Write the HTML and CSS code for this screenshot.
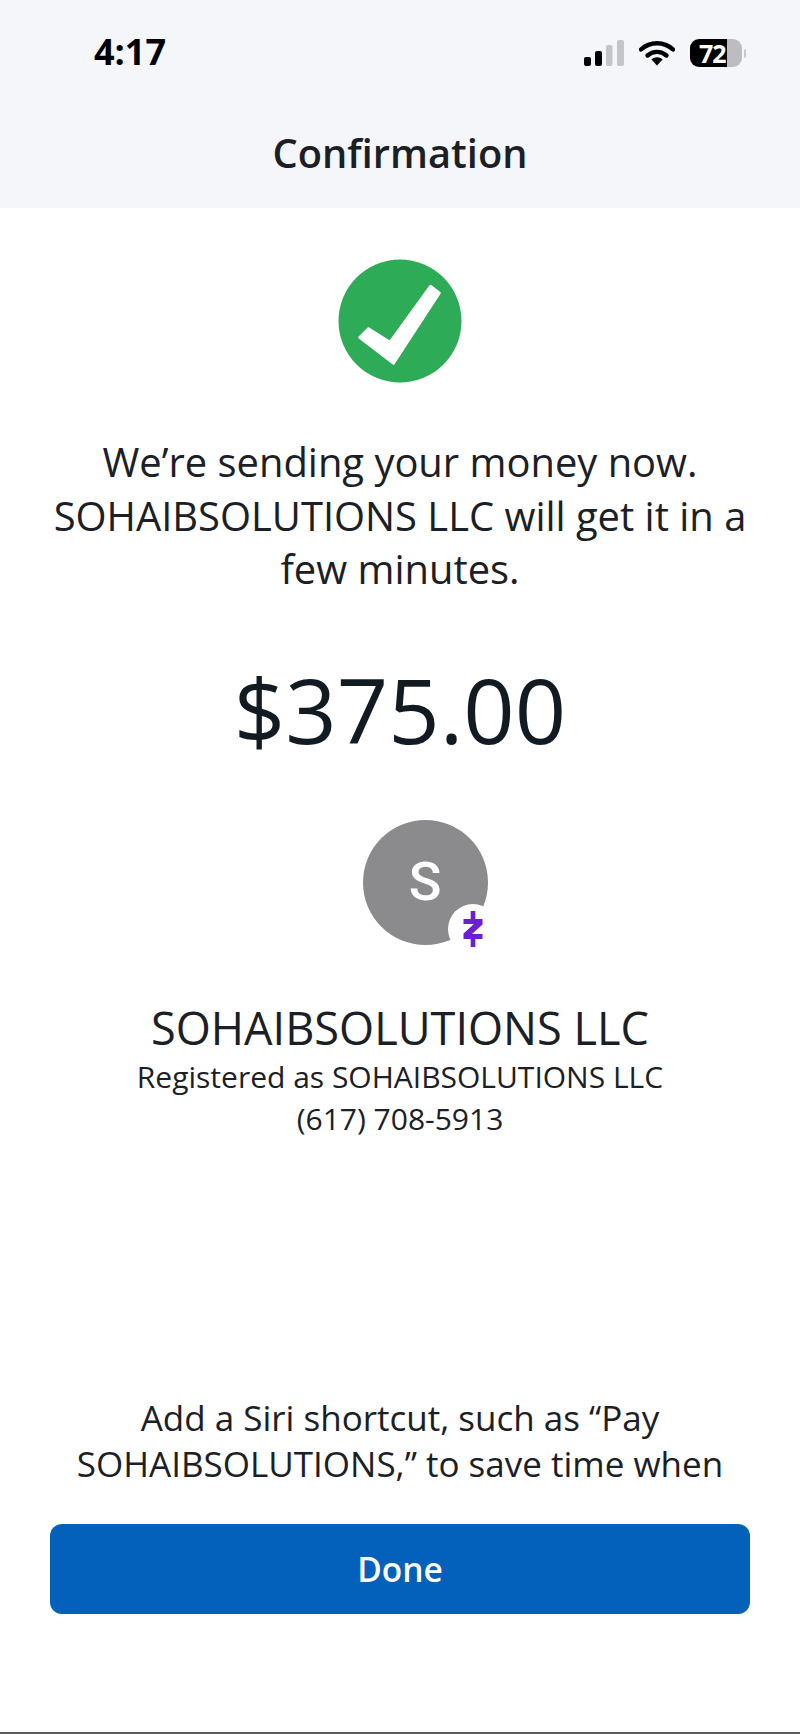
FILE: index.html
```html
<!DOCTYPE html>
<html lang="en">
<head>
<meta charset="utf-8">
<title>Confirmation</title>
<link rel="stylesheet" href="styles.css">
</head>
<body>
<div class="screen">
  <header class="top">
    <div class="status">
      <span class="time">4:17</span>
      <div class="status-icons">
        <svg class="signal" width="40" height="26" viewBox="0 0 40 26">
          <rect x="0" y="17" width="7" height="9" rx="2" fill="#000"/>
          <rect x="11" y="11" width="7" height="15" rx="2" fill="#000"/>
          <rect x="22" y="5" width="6.5" height="21" rx="2" fill="#c4c5c8"/>
          <rect x="33" y="0" width="7" height="26" rx="2" fill="#c4c5c8"/>
        </svg>
        <svg class="wifi" width="36" height="26" viewBox="0 0 36 26">
          <path d="M2 9.5C11 1.2 25 1.2 34 9.5" fill="none" stroke="#000" stroke-width="4.4" stroke-linecap="round"/>
          <path d="M8.5 15.5C14 10.6 22 10.6 27.5 15.5" fill="none" stroke="#000" stroke-width="4.4" stroke-linecap="round"/>
          <path d="M12.4 19.4C15.6 16.4 20.4 16.4 23.6 19.4L18 25.6Z" fill="#000"/>
        </svg>
        <div class="battery">
          <div class="battery-body"><span class="battery-text">72</span></div>
          <div class="battery-tip"></div>
        </div>
      </div>
    </div>
    <h1 class="title">Confirmation</h1>
  </header>

  <main class="content">
    <svg class="check" width="124" height="124" viewBox="0 0 124 124">
      <circle cx="62" cy="62" r="61.5" fill="#2dab57"/>
      <path d="M21.5 78.5L30.5 69.5L52 83L92.5 27L101.5 34L55.5 104.5Z" fill="#fff" stroke="#fff" stroke-width="2.5" stroke-linejoin="round"/>
    </svg>

    <p class="message">We’re sending your money now. SOHAIBSOLUTIONS LLC will get it in a few minutes.</p>

    <div class="amount">$375.00</div>

    <div class="avatar">
      <span class="avatar-letter">S</span>
      <span class="badge">
        <svg width="24" height="38" viewBox="0 0 24 38">
          <path d="M9.7 1H14.3V9H21.5V14.5L11 24H21.5V29H14.3V37H9.7V29H2.5V23.5L13 14H2.5V9H9.7Z" fill="#6d1ed4"/>
        </svg>
      </span>
    </div>

    <div class="name">SOHAIBSOLUTIONS LLC</div>
    <div class="detail">Registered as SOHAIBSOLUTIONS LLC</div>
    <div class="detail">(617) 708-5913</div>

    <p class="siri">Add a Siri shortcut, such as “Pay SOHAIBSOLUTIONS,” to save time when</p>

    <button class="done" type="button">Done</button>
  </main>
</div>
</body>
</html>
```

FILE: styles.css
```css
* { box-sizing: border-box; }

html, body {
  margin: 0;
  padding: 0;
  background: #fff;
}

body {
  font-family: "Open Sans", "Noto Sans", sans-serif;
  color: #1a2026;
}

.screen {
  width: 800px;
  height: 1734px;
  overflow: hidden;
  display: flex;
  flex-direction: column;
  border-bottom: 2px solid #5a5a5a;
}

.top {
  height: 208px;
  background: #f5f6fa;
  flex: none;
}

.status {
  height: 128px;
  padding: 0 54px 0 94px;
  display: flex;
  justify-content: space-between;
  align-items: flex-start;
}

.time {
  margin-top: 30px;
  font-size: 36px;
  line-height: 44px;
  font-weight: 700;
  color: #000;
}

.status-icons {
  margin-top: 39px;
  display: flex;
  align-items: center;
  gap: 15px;
}

.signal { display: block; }
.wifi { display: block; }

.battery {
  display: flex;
  align-items: center;
  gap: 2px;
}

.battery-body {
  width: 52px;
  height: 28px;
  border-radius: 9px;
  background: linear-gradient(to right, #000 0, #000 71%, #bcbdc0 71%, #bcbdc0 100%);
  display: flex;
  align-items: center;
  padding-left: 9px;
}

.battery-text {
  font-size: 25px;
  line-height: 28px;
  font-weight: 700;
  letter-spacing: -1px;
  color: #fff;
}

.battery-tip {
  width: 2px;
  height: 9px;
  border-radius: 0 2px 2px 0;
  background: #c8c9cc;
}

.title {
  margin: 0;
  text-align: center;
  font-size: 39.8px;
  line-height: 50px;
  font-weight: 600;
  color: #1a2026;
}

.content {
  flex: 1;
  display: flex;
  flex-direction: column;
  align-items: center;
  padding: 51px 50px 0;
}

.check { display: block; flex: none; }

.message {
  margin: 52px -4px 0;
  text-align: center;
  font-size: 39.9px;
  line-height: 53.6px;
  font-weight: 400;
}

.amount {
  margin-top: 53px;
  font-size: 90px;
  line-height: 120px;
  font-weight: 400;
  color: #121b22;
}

.avatar {
  position: relative;
  margin-top: 51px;
  margin-left: 50px;
  width: 125px;
  height: 125px;
  border-radius: 50%;
  background: #8b8b8d;
  display: flex;
  align-items: center;
  justify-content: center;
  flex: none;
}

.avatar-letter {
  font-family: "Roboto", sans-serif;
  font-weight: 500;
  font-size: 54px;
  line-height: 60px;
  color: #fff;
}

.badge {
  position: absolute;
  left: 85px;
  top: 84px;
  width: 50px;
  height: 50px;
  border-radius: 50%;
  background: #fff;
  display: flex;
  align-items: center;
  justify-content: center;
}

.name {
  margin-top: 55px;
  font-size: 45.1px;
  line-height: 56px;
}

.detail {
  font-size: 30px;
  line-height: 42px;
}

.siri {
  margin: 255px -10px 0;
  height: 94px;
  overflow: hidden;
  text-align: center;
  font-size: 35px;
  line-height: 46.5px;
}

.done {
  margin-top: 35px;
  width: 700px;
  height: 90px;
  flex: none;
  border: 0;
  border-radius: 12px;
  background: #0360bb;
  color: #fff;
  font-family: inherit;
  font-size: 33.5px;
  font-weight: 600;
}
```
